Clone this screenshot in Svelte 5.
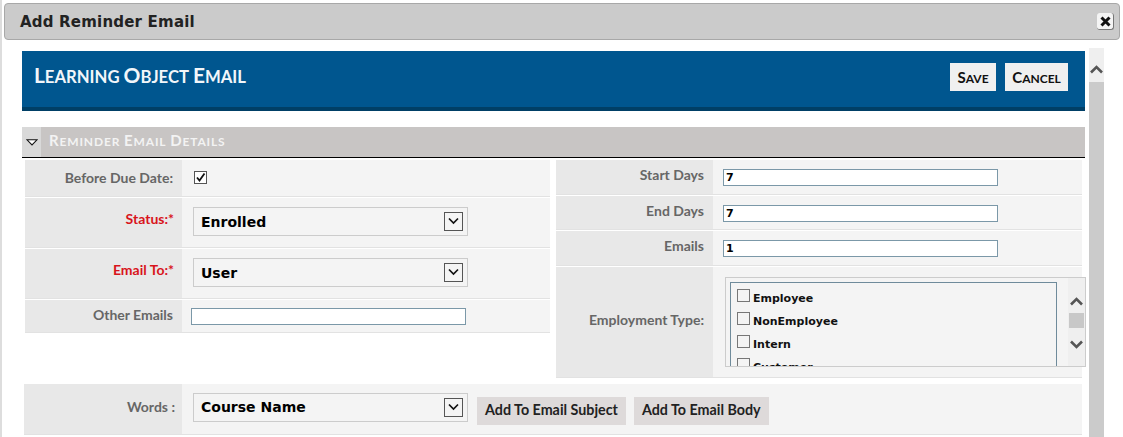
<script lang="ts">
  const employmentTypes = ['Employee', 'NonEmployee', 'Intern', 'Customer'];
</script>

{#snippet caps(text: string)}
  {#each text.split(' ') as word}
    <span class="capword">{word}</span>{' '}
  {/each}
{/snippet}

{#snippet arrow()}
  <span class="arrow">
    <svg width="15" height="15" viewBox="0 0 15 15" aria-hidden="true">
      <path d="M3 4.5 L7.5 9 L12 4.5" fill="none" stroke="#111" stroke-width="1.7" />
    </svg>
  </span>
{/snippet}

{#snippet chevron(dir: string)}
  <svg width="15" height="10" viewBox="0 0 15 10" aria-hidden="true">
    <path d={dir === 'up' ? 'M2 8.5 L7.5 3 L13 8.5' : 'M2 1.5 L7.5 7 L13 1.5'} fill="none" stroke="#555" stroke-width="2.6" />
  </svg>
{/snippet}

<div class="dialog">
  <header class="titlebar">
    <span class="title">Add Reminder Email</span>
    <button class="close" aria-label="Close">
      <svg width="11" height="11" viewBox="0 0 11 11" aria-hidden="true">
        <path d="M1.5 1.5 L9.5 9.5 M9.5 1.5 L1.5 9.5" stroke="#111" stroke-width="3" />
      </svg>
    </button>
  </header>

  <div class="body">
    <main class="content">
      <div class="banner">
        <h1>{@render caps('Learning Object Email')}</h1>
        <div class="actions">
          <button class="action save">{@render caps('Save')}</button>
          <button class="action cancel">{@render caps('Cancel')}</button>
        </div>
      </div>

      <div class="section">
        <span class="toggle">
          <svg width="12" height="7" viewBox="0 0 12 7" aria-hidden="true">
            <path d="M1 .8 H11 L6 6 Z" fill="#fff" stroke="#111" stroke-width="1.1" />
          </svg>
        </span>
        <h2>{@render caps('Reminder Email Details')}</h2>
      </div>

      <div class="columns">
        <div class="form">
          <div class="row r1">
            <div class="label">Before Due Date:</div>
            <div class="field"><span class="checkbox checked">
              <svg width="11" height="11" viewBox="0 0 11 11" aria-hidden="true">
                <path d="M2 5.5 L4.5 8.5 L9.5 1.5" fill="none" stroke="#111" stroke-width="1.8" />
              </svg>
            </span></div>
          </div>
          <div class="row r2">
            <div class="label req">Status:*</div>
            <div class="field"><div class="select">Enrolled {@render arrow()}</div></div>
          </div>
          <div class="row r2">
            <div class="label req">Email To:*</div>
            <div class="field"><div class="select">User {@render arrow()}</div></div>
          </div>
          <div class="row r3">
            <div class="label">Other Emails</div>
            <div class="field"><div class="input wide"></div></div>
          </div>
        </div>

        <div class="form right">
          <div class="row s1">
            <div class="label">Start Days</div>
            <div class="field"><div class="input">7</div></div>
          </div>
          <div class="row s1">
            <div class="label">End Days</div>
            <div class="field"><div class="input">7</div></div>
          </div>
          <div class="row s1">
            <div class="label">Emails</div>
            <div class="field"><div class="input">1</div></div>
          </div>
          <div class="row s2">
            <div class="label mid">Employment Type:</div>
            <div class="field">
              <div class="listwrap">
                <div class="list">
                  {#each employmentTypes as t}
                    <div class="item"><span class="checkbox"></span>{t}</div>
                  {/each}
                </div>
                <div class="listbar">
                  {@render chevron('up')}
                  <span class="listthumb"></span>
                  {@render chevron('down')}
                </div>
              </div>
            </div>
          </div>
        </div>
      </div>

      <div class="row words">
        <div class="label">Words :</div>
        <div class="field wordfield">
          <div class="select">Course Name {@render arrow()}</div>
          <button class="add first">Add To Email Subject</button>
          <button class="add">Add To Email Body</button>
        </div>
      </div>
    </main>

    <div class="scrollbar">
      <div class="scrollbtn">{@render chevron('up')}</div>
    </div>
  </div>
</div>

<style>
  :global(body) {
    margin: 0;
    background: #fff;
  }
  .dialog {
    height: 437px;
    overflow: hidden;
    box-sizing: border-box;
    padding-top: 3px;
    border-left: 2px solid #ddd;
    font-family: Lato, sans-serif;
  }
  .titlebar {
    display: flex;
    align-items: center;
    justify-content: space-between;
    box-sizing: border-box;
    height: 37px;
    margin: 0 3px 0 2px;
    padding: 0 5px 0 15px;
    background: #cbcbcb;
    border: 1px solid #a8a8a8;
    border-radius: 4px;
  }
  .title {
    font: bold 15px "DejaVu Sans", sans-serif;
    letter-spacing: .2px;
    color: #222;
  }
  .close {
    display: flex;
    align-items: center;
    justify-content: center;
    width: 17px;
    height: 17px;
    padding: 0;
    background: #f4f4f4;
    border: 0;
    border-bottom: 1px solid #777;
    border-right: 1px solid #777;
    border-radius: 3px;
  }
  .body {
    display: flex;
    margin-top: 8px;
    padding-left: 20px;
  }
  .content {
    width: 1063px;
    padding-top: 3px;
  }
  .capword {
    display: inline-block;
    text-transform: uppercase;
  }
  .capword::first-letter {
    font-size: 1.25em;
  }
  .banner {
    display: flex;
    align-items: center;
    justify-content: space-between;
    box-sizing: border-box;
    height: 60px;
    padding: 0 17px 4px 12px;
    background: #00568f;
    border-bottom: 4px solid #003f66;
  }
  h1 {
    margin: 0 0 6px;
    font-size: 16.7px;
    font-weight: 700;
    color: #f2f6fa;
  }
  .actions {
    display: flex;
    gap: 9px;
  }
  .action {
    height: 28px;
    padding: 0;
    background: #f0f0f0;
    border: 0;
    font: 700 12px Lato, sans-serif;
    color: #111;
  }
  .save { width: 46px; }
  .cancel { width: 63px; }
  .section {
    display: flex;
    align-items: stretch;
    height: 30px;
    margin-top: 16px;
    background: #c8c5c4;
    border-bottom: 1px solid #000;
  }
  .toggle {
    display: flex;
    align-items: center;
    justify-content: center;
    width: 19px;
    background: #d9d9d9;
  }
  h2 {
    margin: 0 0 4px;
    padding-left: 8px;
    align-self: center;
    font-size: 12px;
    font-weight: 700;
    letter-spacing: .85px;
    color: #f3f3f3;
  }
  .columns {
    display: flex;
    gap: 6px;
    margin: 2px 0 0 3px;
  }
  .form {
    display: flex;
    flex-direction: column;
    width: 525px;
    gap: 1px;
  }
  .form.right {
    width: 526px;
  }
  .row {
    display: grid;
    grid-template-columns: 157px 1fr;
    column-gap: 2px;
    border-bottom: 1px solid #e2e2e2;
    background: #f4f4f4;
  }
  .r1 { height: 36px; }
  .r2 { height: 49px; }
  .r3 { height: 32px; }
  .s1 { height: 33.5px; }
  .s2 { height: 110px; }
  .label {
    box-sizing: border-box;
    padding: 9px 9px 0 0;
    background: #e8e8e8;
    text-align: right;
    font-size: 14px;
    font-weight: 700;
    color: #666;
  }
  .label.req {
    padding: 12px 8px 0 0;
    color: #d8141c;
  }
  .label.mid { padding-top: 44px; }
  .r3 .label, .s1 .label { padding-top: 6px; }
  .field {
    min-width: 0;
    padding-left: 7px;
  }
  .right .field {
    padding-left: 8px;
  }
  .checkbox {
    display: flex;
    align-items: center;
    justify-content: center;
    box-sizing: border-box;
    width: 13px;
    height: 13px;
    flex: none;
    background: #fff;
    border: 1px solid #555;
  }
  .checkbox.checked {
    margin: 11px 0 0 3px;
  }
  .select {
    display: flex;
    align-items: center;
    justify-content: space-between;
    box-sizing: border-box;
    width: 275px;
    height: 29px;
    margin: 9px 0 0 2px;
    padding: 0 4px 0 7px;
    background: #f4f4f4;
    border: 1px solid #ccc;
    font: bold 14px "DejaVu Sans", sans-serif;
    color: #000;
  }
  .arrow {
    display: flex;
    box-sizing: border-box;
    width: 19px;
    height: 19px;
    align-items: center;
    justify-content: center;
    background: #f4f4f4;
    border: 1px solid #555;
  }
  .input {
    box-sizing: border-box;
    width: 275px;
    height: 17px;
    margin-top: 9px;
    padding-left: 2px;
    background: #fff;
    border: 1px solid #7b98a8;
    font: bold 11px/15px "DejaVu Sans", sans-serif;
    color: #000;
  }
  .input.wide {
    margin-top: 8px;
  }
  .listwrap {
    display: flex;
    box-sizing: border-box;
    width: 361px;
    height: 90px;
    margin: 10px 0 0 2px;
    overflow: hidden;
    background: #f4f4f4;
    border: 1px solid #ccc;
  }
  .list {
    box-sizing: border-box;
    width: 327px;
    height: 100%;
    margin: 4px 0 0 4px;
    padding: 4px 0 0 6px;
    overflow: hidden;
    border: 1px solid #6f8b9b;
    border-bottom: 0;
  }
  .item {
    display: flex;
    align-items: center;
    gap: 3px;
    height: 23px;
    font: bold 11px "DejaVu Sans", sans-serif;
    color: #111;
  }
  .item .checkbox {
    margin-bottom: 5px;
    background: #f4f4f4;
    border-color: #777;
  }
  .listbar {
    display: flex;
    flex-direction: column;
    align-items: center;
    box-sizing: border-box;
    padding-top: 18px;
    margin-left: auto;
    width: 17px;
    background: #efefef;
  }
  .listthumb {
    flex: none;
    width: 15px;
    height: 15px;
    margin: 7px 0 12px;
    background: #c8c8c8;
  }
  .words {
    box-sizing: border-box;
    height: 51px;
    margin: 6px 3px 0 2px;
    grid-template-columns: 158px 1fr;
  }
  .words .label {
    padding: 14px 7px 0 0;
  }
  .wordfield {
    display: flex;
    align-items: flex-start;
    gap: 8px;
    padding-left: 9px;
  }
  .wordfield .select {
    flex: none;
    margin: 9px 0 0;
  }
  .add {
    height: 28px;
    margin-top: 13px;
    padding: 0 8px 3px;
    background: #dedada;
    border: 0;
    font: 700 14.3px Lato, sans-serif;
    color: #222;
  }
  .add.first {
    margin-left: 1px;
  }
  .scrollbar {
    width: 15px;
    height: 400px;
    margin-left: 4px;
    background: #cbcbcb;
  }
  .scrollbtn {
    display: flex;
    justify-content: center;
    box-sizing: border-box;
    padding-top: 16px;
    height: 34px;
    background: #efefef;
  }
</style>
